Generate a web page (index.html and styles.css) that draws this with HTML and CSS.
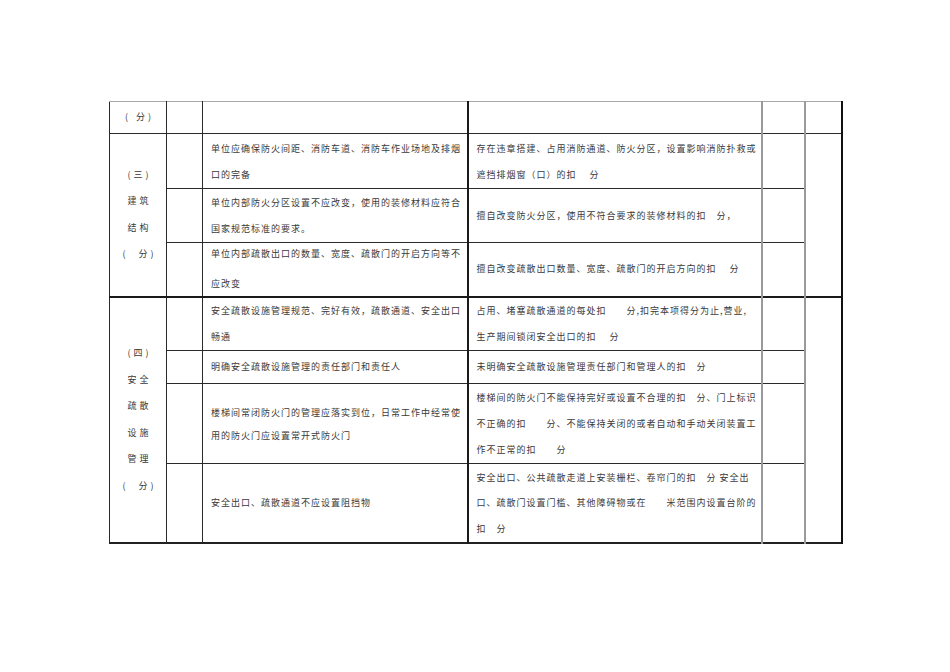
FILE: index.html
```html
<!DOCTYPE html>
<html lang="zh">
<head>
<meta charset="utf-8">
<title>消防检查评分表</title>
<link rel="stylesheet" href="styles.css">
</head>
<body>
<table class="sheet">
  <colgroup>
    <col class="c-sec">
    <col class="c-blank">
    <col class="c-req">
    <col class="c-ded">
    <col class="c-score">
    <col class="c-total">
  </colgroup>
  <tbody>
    <tr class="r32 first">
      <td class="sec"><div class="lbl">(&nbsp;分)</div></td>
      <td></td>
      <td class="req"></td>
      <td class="ded"></td>
      <td class="score"></td>
      <td class="total"></td>
    </tr>
    <tr class="r55">
      <td class="sec" rowspan="3">
        <div class="lbl">(三)</div>
        <div class="lbl">建筑</div>
        <div class="lbl">结构</div>
        <div class="lbl">(&nbsp;&nbsp;分)</div>
      </td>
      <td></td>
      <td class="req lead"><div>单位应确保防火间距、消防车道、消防车作业场地及排烟</div><div>口的完备</div></td>
      <td class="ded lead"><div>存在违章搭建、占用消防通道、防火分区，设置影响消防扑救或</div><div>遮挡排烟窗（口）的扣　 分</div></td>
      <td class="score"></td>
      <td class="total" rowspan="3"></td>
    </tr>
    <tr class="r54">
      <td></td>
      <td class="req two"><div>单位内部防火分区设置不应改变，使用的装修材料应符合</div><div>国家规范标准的要求。</div></td>
      <td class="ded"><div>擅自改变防火分区，使用不符合要求的装修材料的扣　分，</div></td>
      <td class="score"></td>
    </tr>
    <tr class="r54">
      <td></td>
      <td class="req wide"><div>单位内部疏散出口的数量、宽度、疏散门的开启方向等不</div><div>应改变</div></td>
      <td class="ded"><div>擅自改变疏散出口数量、宽度、疏散门的开启方向的扣　 分</div></td>
      <td class="score"></td>
    </tr>
    <tr class="r54 section">
      <td class="sec" rowspan="4">
        <div class="lbl">(四)</div>
        <div class="lbl">安全</div>
        <div class="lbl">疏散</div>
        <div class="lbl">设施</div>
        <div class="lbl">管理</div>
        <div class="lbl">(&nbsp;&nbsp;分)</div>
      </td>
      <td></td>
      <td class="req"><div>安全疏散设施管理规范、完好有效，疏散通道、安全出口</div><div>畅通</div></td>
      <td class="ded"><div>占用、堵塞疏散通道的每处扣　　分,扣完本项得分为止,营业,</div><div>生产期间锁闭安全出口的扣　 分</div></td>
      <td class="score"></td>
      <td class="total" rowspan="4"></td>
    </tr>
    <tr class="r33">
      <td></td>
      <td class="req"><div>明确安全疏散设施管理的责任部门和责任人</div></td>
      <td class="ded"><div>未明确安全疏散设施管理责任部门和管理人的扣　分</div></td>
      <td class="score"></td>
    </tr>
    <tr class="r80">
      <td></td>
      <td class="req tight"><div>楼梯间常闭防火门的管理应落实到位，日常工作中经常使</div><div>用的防火门应设置常开式防火门</div></td>
      <td class="ded"><div>楼梯间的防火门不能保持完好或设置不合理的扣　分、门上标识</div><div>不正确的扣　　分、不能保持关闭的或者自动和手动关闭装置工</div><div>作不正常的扣　　分</div></td>
      <td class="score"></td>
    </tr>
    <tr class="r79 last">
      <td></td>
      <td class="req"><div>安全出口、疏散通道不应设置阻挡物</div></td>
      <td class="ded"><div>安全出口、公共疏散走道上安装栅栏、卷帘门的扣　分 安全出</div><div>口、疏散门设置门槛、其他障碍物或在　　米范围内设置台阶的</div><div>扣　分</div></td>
      <td class="score"></td>
    </tr>
  </tbody>
</table>
</body>
</html>
```

FILE: styles.css
```css
html, body {
  margin: 0;
  padding: 0;
  background: #ffffff;
}

body {
  padding: 101px 0 0 109px;
  font-family: "Noto Sans CJK SC", "Noto Sans", sans-serif;
  color: #3a3a3a;
}

.sheet {
  border-collapse: collapse;
  table-layout: fixed;
  width: 732px;
  border-top: 1px solid #a8a8a8;
  border-left: 1px solid #222;
  border-right: 2px solid #111;
  border-bottom: 2px solid #222;
}

.c-sec { width: 57px; }
.c-blank { width: 36px; }
.c-req { width: 265px; }
.c-ded { width: 294px; }
.c-score { width: 43px; }
.c-total { width: 37px; }

.sheet td {
  border: 1px solid #2a2a2a;
  padding: 0 0 0 8px;
  vertical-align: middle;
  font-size: 9px;
  letter-spacing: 1px;
  line-height: 26px;
  white-space: nowrap;
  overflow: hidden;
}

.r32 { height: 32px; }
.r55 { height: 55px; }
.r54 { height: 54px; }
.r33 { height: 33px; }
.r80 { height: 80px; }
.r79 { height: 79px; }

.sheet tr.first td {
  border-top: 1px solid #a8a8a8;
}

.sheet td.sec {
  padding: 0;
  text-align: center;
  line-height: 26.5px;
}

.lbl {
  letter-spacing: 3px;
  padding-left: 3px;
}

.sheet td.ded {
  border-left: 2px solid #1a1a1a;
}

.sheet td.score,
.sheet td.total {
  border-left: 2px solid #9a9a9a;
  padding: 0;
}

.sheet td.total {
  border-right: 2px solid #111;
}

.sheet tr.section td {
  border-top: 2px solid #1a1a1a;
}

.sheet td.lead {
  padding-top: 2px;
}

.sheet td.two {
  padding-top: 1px;
}

.sheet td.wide {
  line-height: 22px;
}

.sheet td.wide div + div {
  margin-top: 8px;
}

.sheet td.tight {
  line-height: 23px;
}

.sheet tr.last td {
  line-height: 25.5px;
}
```
